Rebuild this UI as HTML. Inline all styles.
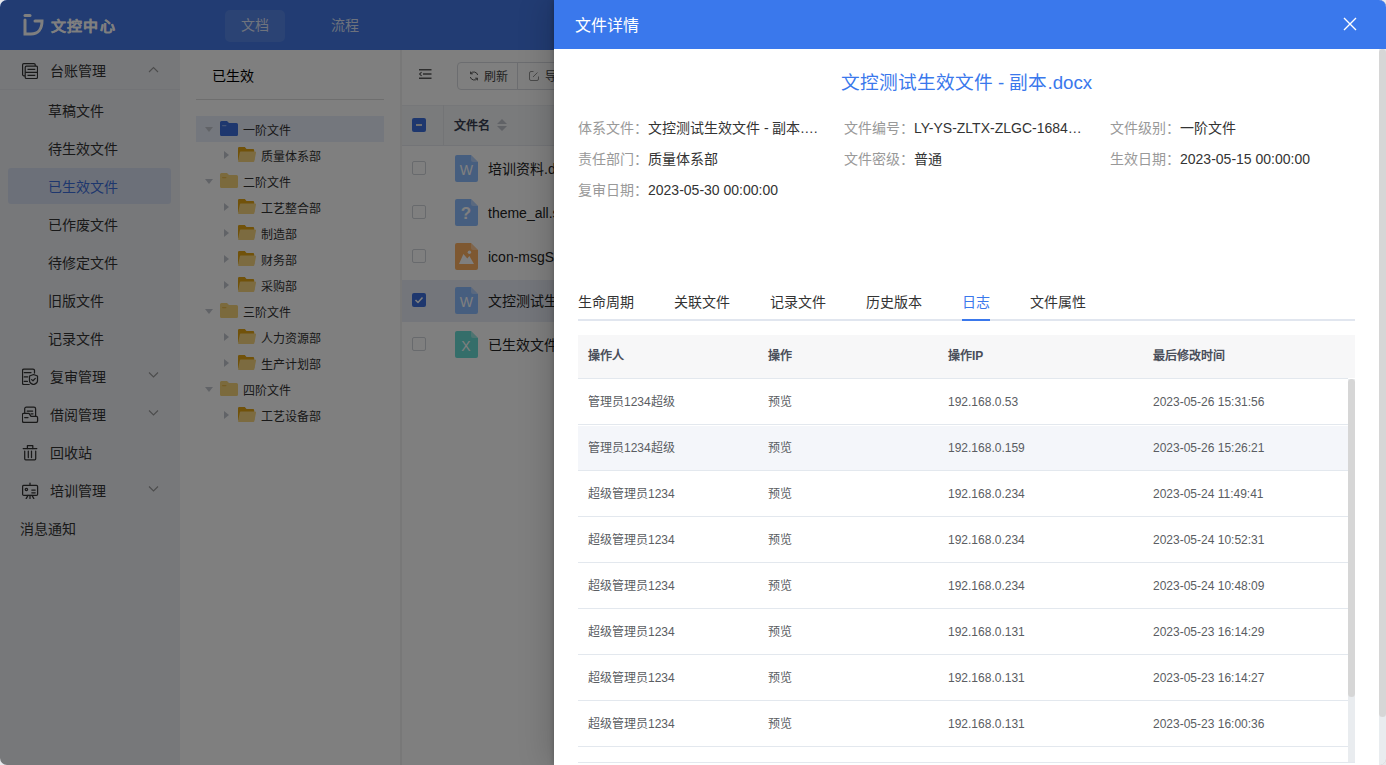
<!DOCTYPE html>
<html lang="zh-CN"><head><meta charset="utf-8">
<style>
*{box-sizing:border-box;margin:0;padding:0}
html,body{width:1386px;height:765px;overflow:hidden;background:#e8e9ec;font-family:"Liberation Sans",sans-serif;}
#app{position:absolute;left:0;top:0;width:1386px;height:765px;border-radius:7px;overflow:hidden;background:#fff}
.abs{position:absolute}
.hdr{left:0;top:0;width:1386px;height:50px;background:#4479e6}
.side{left:0;top:50px;width:180px;height:715px;background:#eef0f5}
.tree{left:180px;top:50px;width:220px;height:715px;background:#fff}
.main{left:402px;top:50px;width:984px;height:715px;background:#fff}
.gap{left:400px;top:50px;width:2px;height:715px;background:#f0f0f0}
.mask{left:0;top:0;width:1386px;height:765px;background:rgba(0,0,0,.5)}
.drawer{left:554px;top:0;width:832px;height:765px;background:#fff;box-shadow:0 0 6px rgba(0,0,0,.25),-6px 0 30px rgba(0,0,0,.16)}
.t{position:absolute;white-space:nowrap;line-height:1}
</style></head><body>
<div id="app">
  <!-- header -->
  <div class="abs hdr">
    <svg class="abs" style="left:23px;top:14px" width="22" height="22" viewBox="0 0 22 22">
      <path d="M2 1.5H7" stroke="#fff" stroke-width="3" stroke-linecap="round" fill="none"/>
      <path d="M2 6V20H8C15 20 19 15 19 7H12" stroke="#fff" stroke-width="3" stroke-linecap="round" fill="none"/>
    </svg>
    <div class="t" style="left:51px;top:18px;font-size:15px;font-weight:bold;color:#fff;letter-spacing:1.2px;-webkit-text-stroke:.2px #fff;transform:scaleY(.93)">文控中心</div>
    <div class="abs" style="left:225px;top:10px;width:60px;height:32px;border-radius:5px;background:rgba(255,255,255,.1)"></div>
    <div class="t" style="left:241px;top:18px;font-size:14px;color:rgba(255,255,255,.82)">文档</div>
    <div class="t" style="left:331px;top:18px;font-size:14px;color:rgba(255,255,255,.82)">流程</div>
  </div>
  <!-- sidebar -->

  <div class="abs side">
    <!-- 台账管理 -->
    <svg class="abs" style="left:22px;top:13px" width="16" height="16" viewBox="0 0 16 16" fill="none" stroke="#333" stroke-width="1.2">
      <path d="M3 12.8H1.8A1.2 1.2 0 0 1 .6 11.6V1.8A1.2 1.2 0 0 1 1.8 .6H12A1.2 1.2 0 0 1 13.2 1.8V3"/><rect x="3.2" y="3.2" width="12.3" height="12.3" rx="1.2"/><path d="M5.5 6.3H13.3M3.2 9.3H15.5M5.5 12.4H13.3"/>
    </svg>
    <div class="t" style="left:50px;top:14px;font-size:14px;color:#333">台账管理</div>
    <svg class="abs" style="left:148px;top:16px" width="11" height="7" viewBox="0 0 11 7" fill="none" stroke="#999" stroke-width="1.1"><path d="M1 6L5.5 1.5L10 6"/></svg>
    <div class="abs" style="left:0;top:39px;width:180px;height:1px;background:#e4e6ec"></div>
    <div class="t" style="left:48px;top:54px;font-size:14px;color:#333">草稿文件</div>
    <div class="t" style="left:48px;top:92px;font-size:14px;color:#333">待生效文件</div>
    <div class="abs" style="left:8px;top:118px;width:163px;height:36px;border-radius:3px;background:#d9e1f2"></div>
    <div class="t" style="left:48px;top:130px;font-size:14px;color:#3d6fdc">已生效文件</div>
    <div class="t" style="left:48px;top:168px;font-size:14px;color:#333">已作废文件</div>
    <div class="t" style="left:48px;top:206px;font-size:14px;color:#333">待修定文件</div>
    <div class="t" style="left:48px;top:244px;font-size:14px;color:#333">旧版文件</div>
    <div class="t" style="left:48px;top:282px;font-size:14px;color:#333">记录文件</div>
    <!-- 复审管理 -->
    <svg class="abs" style="left:22px;top:318px" width="17" height="17" viewBox="0 0 17 17" fill="none" stroke="#333" stroke-width="1.25" stroke-linecap="round" stroke-linejoin="round"><path d="M7.2 16.5H2A1.5 1.5 0 0 1 .5 15V2.5A1.5 1.5 0 0 1 2 1H11A1.5 1.5 0 0 1 12.5 2.5V5"/><path d="M2.2 4.5H9M2.2 8.9H5.6M2.2 13.4H5.4"/><path d="M11.5 6.5L15.5 8V12.8C15.5 14.5 13.5 16 11.5 16.6C9.5 16 7.5 14.5 7.5 12.8V8Z"/><path d="M9.6 11.6L11 12.8L13.3 10.4"/></svg>
    <div class="t" style="left:50px;top:320px;font-size:14px;color:#333">复审管理</div>
    <svg class="abs" style="left:148px;top:321px" width="11" height="7" viewBox="0 0 11 7" fill="none" stroke="#999" stroke-width="1.1"><path d="M1 1.5L5.5 6L10 1.5"/></svg>
    <!-- 借阅管理 -->
    <svg class="abs" style="left:22px;top:356px" width="17" height="17" viewBox="0 0 17 17" fill="none" stroke="#333" stroke-width="1.25" stroke-linecap="round" stroke-linejoin="round"><path d="M2.7 7.3V2.8A1.6 1.6 0 0 1 4.3 1.2H12A1.6 1.6 0 0 1 13.6 2.8V10.4"/><path d="M5.2 5H10.7M9 7.8H11"/><path d="M.4 15V8.8A1.3 1.3 0 0 1 1.7 7.3H7L9 10.4H14.3A1.3 1.3 0 0 1 15.6 11.7V15A1.4 1.4 0 0 1 14.2 16.4H1.8A1.4 1.4 0 0 1 .4 15Z"/><path d="M2.7 11.5H6"/></svg>
    <div class="t" style="left:50px;top:358px;font-size:14px;color:#333">借阅管理</div>
    <svg class="abs" style="left:148px;top:359px" width="11" height="7" viewBox="0 0 11 7" fill="none" stroke="#999" stroke-width="1.1"><path d="M1 1.5L5.5 6L10 1.5"/></svg>
    <!-- 回收站 -->
    <svg class="abs" style="left:22px;top:394px" width="17" height="17" viewBox="0 0 17 17" fill="none" stroke="#333" stroke-width="1.25" stroke-linecap="round" stroke-linejoin="round"><path d="M1.2 4.5H14.8"/><path d="M5.4 4.5V1.5H10.8V4.5"/><path d="M2.7 7V14.8A1 1 0 0 0 3.7 15.8H12.7A1 1 0 0 0 13.7 14.8V7"/><path d="M6.3 7V13.5M9.5 7V13.5"/></svg>
    <div class="t" style="left:50px;top:396px;font-size:14px;color:#333">回收站</div>
    <!-- 培训管理 -->
    <svg class="abs" style="left:22px;top:432px" width="17" height="17" viewBox="0 0 17 17" fill="none" stroke="#333" stroke-width="1.25" stroke-linecap="round" stroke-linejoin="round"><rect x=".6" y="3.4" width="15" height="10" rx="1.2"/><path d="M8 1V3.4"/><circle cx="4.4" cy="7.5" r="1.2"/><path d="M9.8 8H13.2M9.8 10.8H13.2"/><path d="M6 13.4L4.2 16.6M10 13.4L11.8 16.6M8 13.4V16.6"/></svg>
    <div class="t" style="left:50px;top:434px;font-size:14px;color:#333">培训管理</div>
    <svg class="abs" style="left:148px;top:435px" width="11" height="7" viewBox="0 0 11 7" fill="none" stroke="#999" stroke-width="1.1"><path d="M1 1.5L5.5 6L10 1.5"/></svg>
    <div class="t" style="left:20px;top:472px;font-size:14px;color:#333">消息通知</div>
  </div>
  <div class="abs gap"></div>
  <div class="abs tree">
<div class="t" style="left:32px;top:19px;font-size:14px;color:#000">已生效</div>
<div class="abs" style="left:16px;top:49px;width:188px;height:1px;background:#dcdcdc"></div>
<div class="abs" style="left:16px;top:66px;width:188px;height:26px;background:#e9eefa"></div>
<svg class="abs" style="left:25px;top:77px" width="8" height="5" viewBox="0 0 8 5"><path d="M0 0H8L4 5Z" fill="#c3c7cf"/></svg>
<svg class="abs" style="left:40px;top:71px" width="18" height="15" viewBox="0 0 18 15"><path d="M1.5 0H7L9 2H16.5A1.5 1.5 0 0 1 18 3.5V13.5A1.5 1.5 0 0 1 16.5 15H1.5A1.5 1.5 0 0 1 0 13.5V1.5A1.5 1.5 0 0 1 1.5 0Z" fill="#3d6fdc"/><rect x="2" y="4" width="4.5" height="1.2" rx=".6" fill="#86a8ee"/></svg>
<div class="t" style="left:63px;top:75px;font-size:12px;color:#333">一阶文件</div>
<svg class="abs" style="left:44px;top:101px" width="5" height="8" viewBox="0 0 5 8"><path d="M0 0V8L5 4Z" fill="#c3c7cf"/></svg>
<svg class="abs" style="left:58px;top:97px" width="18" height="15" viewBox="0 0 18 15"><path d="M1.2 0H6.8L8.5 2H15A1.2 1.2 0 0 1 16.2 3.2V13H0V1.2A1.2 1.2 0 0 1 1.2 0Z" fill="#e2a414"/><path d="M2.8 4.6H17A1 1 0 0 1 18 5.8L16.4 14.1A1.1 1.1 0 0 1 15.3 15H1A1 1 0 0 1 0 13.9L1.8 5.4A1 1 0 0 1 2.8 4.6Z" fill="#f8d680"/></svg>
<div class="t" style="left:81px;top:101px;font-size:12px;color:#333">质量体系部</div>
<svg class="abs" style="left:25px;top:129px" width="8" height="5" viewBox="0 0 8 5"><path d="M0 0H8L4 5Z" fill="#c3c7cf"/></svg>
<svg class="abs" style="left:40px;top:123px" width="18" height="15" viewBox="0 0 18 15"><path d="M1.5 0H7L9 2H16.5A1.5 1.5 0 0 1 18 3.5V13.5A1.5 1.5 0 0 1 16.5 15H1.5A1.5 1.5 0 0 1 0 13.5V1.5A1.5 1.5 0 0 1 1.5 0Z" fill="#f7d57a"/><rect x="2" y="4" width="4.5" height="1.2" rx=".6" fill="#e8b94a"/></svg>
<div class="t" style="left:63px;top:127px;font-size:12px;color:#333">二阶文件</div>
<svg class="abs" style="left:44px;top:153px" width="5" height="8" viewBox="0 0 5 8"><path d="M0 0V8L5 4Z" fill="#c3c7cf"/></svg>
<svg class="abs" style="left:58px;top:149px" width="18" height="15" viewBox="0 0 18 15"><path d="M1.2 0H6.8L8.5 2H15A1.2 1.2 0 0 1 16.2 3.2V13H0V1.2A1.2 1.2 0 0 1 1.2 0Z" fill="#e2a414"/><path d="M2.8 4.6H17A1 1 0 0 1 18 5.8L16.4 14.1A1.1 1.1 0 0 1 15.3 15H1A1 1 0 0 1 0 13.9L1.8 5.4A1 1 0 0 1 2.8 4.6Z" fill="#f8d680"/></svg>
<div class="t" style="left:81px;top:153px;font-size:12px;color:#333">工艺整合部</div>
<svg class="abs" style="left:44px;top:179px" width="5" height="8" viewBox="0 0 5 8"><path d="M0 0V8L5 4Z" fill="#c3c7cf"/></svg>
<svg class="abs" style="left:58px;top:175px" width="18" height="15" viewBox="0 0 18 15"><path d="M1.2 0H6.8L8.5 2H15A1.2 1.2 0 0 1 16.2 3.2V13H0V1.2A1.2 1.2 0 0 1 1.2 0Z" fill="#e2a414"/><path d="M2.8 4.6H17A1 1 0 0 1 18 5.8L16.4 14.1A1.1 1.1 0 0 1 15.3 15H1A1 1 0 0 1 0 13.9L1.8 5.4A1 1 0 0 1 2.8 4.6Z" fill="#f8d680"/></svg>
<div class="t" style="left:81px;top:179px;font-size:12px;color:#333">制造部</div>
<svg class="abs" style="left:44px;top:205px" width="5" height="8" viewBox="0 0 5 8"><path d="M0 0V8L5 4Z" fill="#c3c7cf"/></svg>
<svg class="abs" style="left:58px;top:201px" width="18" height="15" viewBox="0 0 18 15"><path d="M1.2 0H6.8L8.5 2H15A1.2 1.2 0 0 1 16.2 3.2V13H0V1.2A1.2 1.2 0 0 1 1.2 0Z" fill="#e2a414"/><path d="M2.8 4.6H17A1 1 0 0 1 18 5.8L16.4 14.1A1.1 1.1 0 0 1 15.3 15H1A1 1 0 0 1 0 13.9L1.8 5.4A1 1 0 0 1 2.8 4.6Z" fill="#f8d680"/></svg>
<div class="t" style="left:81px;top:205px;font-size:12px;color:#333">财务部</div>
<svg class="abs" style="left:44px;top:231px" width="5" height="8" viewBox="0 0 5 8"><path d="M0 0V8L5 4Z" fill="#c3c7cf"/></svg>
<svg class="abs" style="left:58px;top:227px" width="18" height="15" viewBox="0 0 18 15"><path d="M1.2 0H6.8L8.5 2H15A1.2 1.2 0 0 1 16.2 3.2V13H0V1.2A1.2 1.2 0 0 1 1.2 0Z" fill="#e2a414"/><path d="M2.8 4.6H17A1 1 0 0 1 18 5.8L16.4 14.1A1.1 1.1 0 0 1 15.3 15H1A1 1 0 0 1 0 13.9L1.8 5.4A1 1 0 0 1 2.8 4.6Z" fill="#f8d680"/></svg>
<div class="t" style="left:81px;top:231px;font-size:12px;color:#333">采购部</div>
<svg class="abs" style="left:25px;top:259px" width="8" height="5" viewBox="0 0 8 5"><path d="M0 0H8L4 5Z" fill="#c3c7cf"/></svg>
<svg class="abs" style="left:40px;top:253px" width="18" height="15" viewBox="0 0 18 15"><path d="M1.5 0H7L9 2H16.5A1.5 1.5 0 0 1 18 3.5V13.5A1.5 1.5 0 0 1 16.5 15H1.5A1.5 1.5 0 0 1 0 13.5V1.5A1.5 1.5 0 0 1 1.5 0Z" fill="#f7d57a"/><rect x="2" y="4" width="4.5" height="1.2" rx=".6" fill="#e8b94a"/></svg>
<div class="t" style="left:63px;top:257px;font-size:12px;color:#333">三阶文件</div>
<svg class="abs" style="left:44px;top:283px" width="5" height="8" viewBox="0 0 5 8"><path d="M0 0V8L5 4Z" fill="#c3c7cf"/></svg>
<svg class="abs" style="left:58px;top:279px" width="18" height="15" viewBox="0 0 18 15"><path d="M1.2 0H6.8L8.5 2H15A1.2 1.2 0 0 1 16.2 3.2V13H0V1.2A1.2 1.2 0 0 1 1.2 0Z" fill="#e2a414"/><path d="M2.8 4.6H17A1 1 0 0 1 18 5.8L16.4 14.1A1.1 1.1 0 0 1 15.3 15H1A1 1 0 0 1 0 13.9L1.8 5.4A1 1 0 0 1 2.8 4.6Z" fill="#f8d680"/></svg>
<div class="t" style="left:81px;top:283px;font-size:12px;color:#333">人力资源部</div>
<svg class="abs" style="left:44px;top:309px" width="5" height="8" viewBox="0 0 5 8"><path d="M0 0V8L5 4Z" fill="#c3c7cf"/></svg>
<svg class="abs" style="left:58px;top:305px" width="18" height="15" viewBox="0 0 18 15"><path d="M1.2 0H6.8L8.5 2H15A1.2 1.2 0 0 1 16.2 3.2V13H0V1.2A1.2 1.2 0 0 1 1.2 0Z" fill="#e2a414"/><path d="M2.8 4.6H17A1 1 0 0 1 18 5.8L16.4 14.1A1.1 1.1 0 0 1 15.3 15H1A1 1 0 0 1 0 13.9L1.8 5.4A1 1 0 0 1 2.8 4.6Z" fill="#f8d680"/></svg>
<div class="t" style="left:81px;top:309px;font-size:12px;color:#333">生产计划部</div>
<svg class="abs" style="left:25px;top:337px" width="8" height="5" viewBox="0 0 8 5"><path d="M0 0H8L4 5Z" fill="#c3c7cf"/></svg>
<svg class="abs" style="left:40px;top:331px" width="18" height="15" viewBox="0 0 18 15"><path d="M1.5 0H7L9 2H16.5A1.5 1.5 0 0 1 18 3.5V13.5A1.5 1.5 0 0 1 16.5 15H1.5A1.5 1.5 0 0 1 0 13.5V1.5A1.5 1.5 0 0 1 1.5 0Z" fill="#f7d57a"/><rect x="2" y="4" width="4.5" height="1.2" rx=".6" fill="#e8b94a"/></svg>
<div class="t" style="left:63px;top:335px;font-size:12px;color:#333">四阶文件</div>
<svg class="abs" style="left:44px;top:361px" width="5" height="8" viewBox="0 0 5 8"><path d="M0 0V8L5 4Z" fill="#c3c7cf"/></svg>
<svg class="abs" style="left:58px;top:357px" width="18" height="15" viewBox="0 0 18 15"><path d="M1.2 0H6.8L8.5 2H15A1.2 1.2 0 0 1 16.2 3.2V13H0V1.2A1.2 1.2 0 0 1 1.2 0Z" fill="#e2a414"/><path d="M2.8 4.6H17A1 1 0 0 1 18 5.8L16.4 14.1A1.1 1.1 0 0 1 15.3 15H1A1 1 0 0 1 0 13.9L1.8 5.4A1 1 0 0 1 2.8 4.6Z" fill="#f8d680"/></svg>
<div class="t" style="left:81px;top:361px;font-size:12px;color:#333">工艺设备部</div>
</div>
  <div class="abs main">
<svg class="abs" style="left:17px;top:19px" width="13" height="10" viewBox="0 0 13 10" fill="none" stroke="#5a5a5a" stroke-width="1.4"><path d="M0 .8H12.5M4 5H12.5M0 9.2H12.5"/><path d="M2.6 3.2L.6 5L2.6 6.8" stroke-width="1.1"/></svg>
<div class="abs" style="left:55px;top:12px;width:200px;height:28px;border:1px solid #d9dbe0;border-radius:4px"></div>
<div class="abs" style="left:115px;top:12px;width:1px;height:28px;background:#d9dbe0"></div>
<svg class="abs" style="left:67px;top:21px" width="10" height="10" viewBox="0 0 10 10" fill="none" stroke="#444" stroke-width=".9"><path d="M8.7 4A4 4 0 0 0 1.6 2.6M1.3 6A4 4 0 0 0 8.4 7.4"/><path d="M1.6 .6V2.8H3.8M8.4 9.4V7.2H6.2"/></svg>
<div class="t" style="left:82px;top:21px;font-size:12px;color:#444">刷新</div>
<svg class="abs" style="left:127px;top:21px" width="10" height="10" viewBox="0 0 10 10" fill="none" stroke="#888" stroke-width=".9"><path d="M4.5 .5H2A1.5 1.5 0 0 0 .5 2V8A1.5 1.5 0 0 0 2 9.5H8A1.5 1.5 0 0 0 9.5 8V5.5"/><path d="M4 6L8.5 1.5"/></svg>
<div class="t" style="left:143px;top:21px;font-size:12px;color:#444">导出</div>
<div class="abs" style="left:0;top:55px;width:984px;height:41px;background:#f5f6f8;border-top:1px solid #eceef2;border-bottom:1px solid #e6e9ef"></div>
<div class="abs" style="left:41px;top:55px;width:1px;height:40px;background:#e6e8ec"></div>
<div class="abs" style="left:10px;top:68px;width:14px;height:14px;border-radius:2px;background:#3d6fdc"></div>
<div class="abs" style="left:14px;top:74px;width:6px;height:2px;background:#ddd"></div>
<div class="t" style="left:52px;top:70px;font-size:12px;font-weight:bold;color:#383f52">文件名</div>
<svg class="abs" style="left:95px;top:69px" width="10" height="12" viewBox="0 0 10 12"><path d="M5 0L10 5H0Z M0 7H10L5 12Z" fill="#c0c4cc"/></svg>
<div class="abs" style="left:10px;top:111px;width:14px;height:14px;border-radius:2px;border:1px solid #d0d4da;background:#fff"></div>
<svg class="abs" style="left:53px;top:105px" width="23" height="27" viewBox="0 0 23 27"><path d="M2 0H16L23 7V25A2 2 0 0 1 21 27H2A2 2 0 0 1 0 25V2A2 2 0 0 1 2 0Z" fill="#8cbcff"/><path d="M16 0L23 7H18A2 2 0 0 1 16 5Z" fill="#fff" fill-opacity=".35"/><text x="11.3" y="20" font-family="Liberation Sans" font-size="14" fill="#fff" text-anchor="middle">W</text></svg>
<div class="t" style="left:86px;top:112px;font-size:14px;color:#222">培训资料.docx</div>
<div class="abs" style="left:10px;top:155px;width:14px;height:14px;border-radius:2px;border:1px solid #d0d4da;background:#fff"></div>
<svg class="abs" style="left:53px;top:149px" width="23" height="27" viewBox="0 0 23 27"><path d="M2 0H16L23 7V25A2 2 0 0 1 21 27H2A2 2 0 0 1 0 25V2A2 2 0 0 1 2 0Z" fill="#8cbcff"/><path d="M16 0L23 7H18A2 2 0 0 1 16 5Z" fill="#fff" fill-opacity=".35"/><text x="11" y="20" font-family="Liberation Sans" font-size="17" font-weight="bold" fill="#fff" text-anchor="middle">?</text></svg>
<div class="t" style="left:86px;top:156px;font-size:14px;color:#222">theme_all.scss</div>
<div class="abs" style="left:10px;top:199px;width:14px;height:14px;border-radius:2px;border:1px solid #d0d4da;background:#fff"></div>
<svg class="abs" style="left:53px;top:193px" width="23" height="27" viewBox="0 0 23 27"><path d="M2 0H16L23 7V25A2 2 0 0 1 21 27H2A2 2 0 0 1 0 25V2A2 2 0 0 1 2 0Z" fill="#fdb062"/><path d="M16 0L23 7H18A2 2 0 0 1 16 5Z" fill="#fff" fill-opacity=".35"/><circle cx="14.4" cy="9.2" r="1.7" fill="#fff"/><path d="M4 21L8.4 11L12.3 15.6L14.4 13L19 21Z" fill="#fff"/></svg>
<div class="t" style="left:86px;top:200px;font-size:14px;color:#222">icon-msgSend.png</div>
<div class="abs" style="left:0;top:230px;width:984px;height:42px;background:#e8edf7"></div>
<div class="abs" style="left:10px;top:243px;width:14px;height:14px;border-radius:2px;background:#3d6fdc"></div>
<svg class="abs" style="left:10px;top:243px" width="14" height="14" viewBox="0 0 14 14" fill="none" stroke="#fff" stroke-width="1.5"><path d="M3.5 7L6 9.5L10.5 4.5"/></svg>
<svg class="abs" style="left:53px;top:237px" width="23" height="27" viewBox="0 0 23 27"><path d="M2 0H16L23 7V25A2 2 0 0 1 21 27H2A2 2 0 0 1 0 25V2A2 2 0 0 1 2 0Z" fill="#8cbcff"/><path d="M16 0L23 7H18A2 2 0 0 1 16 5Z" fill="#fff" fill-opacity=".35"/><text x="11.3" y="20" font-family="Liberation Sans" font-size="14" fill="#fff" text-anchor="middle">W</text></svg>
<div class="t" style="left:86px;top:244px;font-size:14px;color:#222">文控测试生效文件 - 副本.docx</div>
<div class="abs" style="left:10px;top:287px;width:14px;height:14px;border-radius:2px;border:1px solid #d0d4da;background:#fff"></div>
<svg class="abs" style="left:53px;top:281px" width="23" height="27" viewBox="0 0 23 27"><path d="M2 0H16L23 7V25A2 2 0 0 1 21 27H2A2 2 0 0 1 0 25V2A2 2 0 0 1 2 0Z" fill="#68dcd5"/><path d="M16 0L23 7H18A2 2 0 0 1 16 5Z" fill="#fff" fill-opacity=".35"/><text x="11" y="20" font-family="Liberation Sans" font-size="14" fill="#fff" text-anchor="middle">X</text></svg>
<div class="t" style="left:86px;top:288px;font-size:14px;color:#222">已生效文件.xlsx</div>
</div>
  <div class="abs mask"></div>
  <!-- drawer -->
  <div class="abs drawer">
<div class="abs" style="left:0;top:0;width:832px;height:49px;background:#3a78ec"></div>
<div class="t" style="left:21px;top:18px;font-size:16px;color:#fff">文件详情</div>
<svg class="abs" style="left:789px;top:17px" width="14" height="14" viewBox="0 0 14 14" stroke="#fff" stroke-width="1.4"><path d="M1 1L13 13M13 1L1 13"/></svg>
<div class="t" style="left:0;width:825px;text-align:center;top:74px;font-size:18.7px;color:#3a78ec">文控测试生效文件 - 副本.docx</div>
<div class="t" style="left:24px;top:121px;font-size:14px;color:#999">体系文件：</div>
<div class="t" style="left:94px;top:121px;width:172px;overflow:hidden;text-overflow:ellipsis;font-size:14px;color:#333">文控测试生效文件 - 副本.docx</div>
<div class="t" style="left:290px;top:121px;font-size:14px;color:#999">文件编号：</div>
<div class="t" style="left:360px;top:121px;width:172px;overflow:hidden;text-overflow:ellipsis;font-size:14px;color:#333">LY-YS-ZLTX-ZLGC-1684222</div>
<div class="t" style="left:556px;top:121px;font-size:14px;color:#999">文件级别：</div>
<div class="t" style="left:626px;top:121px;width:172px;overflow:hidden;text-overflow:ellipsis;font-size:14px;color:#333">一阶文件</div>
<div class="t" style="left:24px;top:152px;font-size:14px;color:#999">责任部门：</div>
<div class="t" style="left:94px;top:152px;width:172px;overflow:hidden;text-overflow:ellipsis;font-size:14px;color:#333">质量体系部</div>
<div class="t" style="left:290px;top:152px;font-size:14px;color:#999">文件密级：</div>
<div class="t" style="left:360px;top:152px;width:172px;overflow:hidden;text-overflow:ellipsis;font-size:14px;color:#333">普通</div>
<div class="t" style="left:556px;top:152px;font-size:14px;color:#999">生效日期：</div>
<div class="t" style="left:626px;top:152px;width:172px;overflow:hidden;text-overflow:ellipsis;font-size:14px;color:#333">2023-05-15 00:00:00</div>
<div class="t" style="left:24px;top:183px;font-size:14px;color:#999">复审日期：</div>
<div class="t" style="left:94px;top:183px;width:172px;overflow:hidden;text-overflow:ellipsis;font-size:14px;color:#333">2023-05-30 00:00:00</div>
<div class="t" style="left:24px;top:295px;font-size:14px;color:#333">生命周期</div>
<div class="t" style="left:120px;top:295px;font-size:14px;color:#333">关联文件</div>
<div class="t" style="left:216px;top:295px;font-size:14px;color:#333">记录文件</div>
<div class="t" style="left:312px;top:295px;font-size:14px;color:#333">历史版本</div>
<div class="t" style="left:408px;top:295px;font-size:14px;color:#3a78ec">日志</div>
<div class="t" style="left:476px;top:295px;font-size:14px;color:#333">文件属性</div>
<div class="abs" style="left:24px;top:319px;width:777px;height:2px;background:#e1e6ef"></div>
<div class="abs" style="left:408px;top:319px;width:28px;height:2px;background:#3a78ec"></div>
<div class="abs" style="left:24px;top:335px;width:777px;height:43px;background:#f7f7f8"></div>
<div class="abs" style="left:24px;top:378px;width:770px;height:1px;background:#e3e8ee"></div>
<div class="t" style="left:34px;top:350px;font-size:12px;font-weight:bold;color:#4a4f5a">操作人</div>
<div class="t" style="left:214px;top:350px;font-size:12px;font-weight:bold;color:#4a4f5a">操作</div>
<div class="t" style="left:394px;top:350px;font-size:12px;font-weight:bold;color:#4a4f5a">操作IP</div>
<div class="t" style="left:599px;top:350px;font-size:12px;font-weight:bold;color:#4a4f5a">最后修改时间</div>
<div class="abs" style="left:24px;top:424px;width:770px;height:1px;background:#e3e8ee"></div>
<div class="t" style="left:34px;top:396px;font-size:12px;color:#5a5d62">管理员1234超级</div>
<div class="t" style="left:214px;top:396px;font-size:12px;color:#5a5d62">预览</div>
<div class="t" style="left:394px;top:396px;font-size:12px;color:#5a5d62">192.168.0.53</div>
<div class="t" style="left:599px;top:396px;font-size:12px;color:#5a5d62">2023-05-26 15:31:56</div>
<div class="abs" style="left:24px;top:426px;width:770px;height:44px;background:#f4f6fa"></div>
<div class="abs" style="left:24px;top:470px;width:770px;height:1px;background:#e3e8ee"></div>
<div class="t" style="left:34px;top:442px;font-size:12px;color:#5a5d62">管理员1234超级</div>
<div class="t" style="left:214px;top:442px;font-size:12px;color:#5a5d62">预览</div>
<div class="t" style="left:394px;top:442px;font-size:12px;color:#5a5d62">192.168.0.159</div>
<div class="t" style="left:599px;top:442px;font-size:12px;color:#5a5d62">2023-05-26 15:26:21</div>
<div class="abs" style="left:24px;top:516px;width:770px;height:1px;background:#e3e8ee"></div>
<div class="t" style="left:34px;top:488px;font-size:12px;color:#5a5d62">超级管理员1234</div>
<div class="t" style="left:214px;top:488px;font-size:12px;color:#5a5d62">预览</div>
<div class="t" style="left:394px;top:488px;font-size:12px;color:#5a5d62">192.168.0.234</div>
<div class="t" style="left:599px;top:488px;font-size:12px;color:#5a5d62">2023-05-24 11:49:41</div>
<div class="abs" style="left:24px;top:562px;width:770px;height:1px;background:#e3e8ee"></div>
<div class="t" style="left:34px;top:534px;font-size:12px;color:#5a5d62">超级管理员1234</div>
<div class="t" style="left:214px;top:534px;font-size:12px;color:#5a5d62">预览</div>
<div class="t" style="left:394px;top:534px;font-size:12px;color:#5a5d62">192.168.0.234</div>
<div class="t" style="left:599px;top:534px;font-size:12px;color:#5a5d62">2023-05-24 10:52:31</div>
<div class="abs" style="left:24px;top:608px;width:770px;height:1px;background:#e3e8ee"></div>
<div class="t" style="left:34px;top:580px;font-size:12px;color:#5a5d62">超级管理员1234</div>
<div class="t" style="left:214px;top:580px;font-size:12px;color:#5a5d62">预览</div>
<div class="t" style="left:394px;top:580px;font-size:12px;color:#5a5d62">192.168.0.234</div>
<div class="t" style="left:599px;top:580px;font-size:12px;color:#5a5d62">2023-05-24 10:48:09</div>
<div class="abs" style="left:24px;top:654px;width:770px;height:1px;background:#e3e8ee"></div>
<div class="t" style="left:34px;top:626px;font-size:12px;color:#5a5d62">超级管理员1234</div>
<div class="t" style="left:214px;top:626px;font-size:12px;color:#5a5d62">预览</div>
<div class="t" style="left:394px;top:626px;font-size:12px;color:#5a5d62">192.168.0.131</div>
<div class="t" style="left:599px;top:626px;font-size:12px;color:#5a5d62">2023-05-23 16:14:29</div>
<div class="abs" style="left:24px;top:700px;width:770px;height:1px;background:#e3e8ee"></div>
<div class="t" style="left:34px;top:672px;font-size:12px;color:#5a5d62">超级管理员1234</div>
<div class="t" style="left:214px;top:672px;font-size:12px;color:#5a5d62">预览</div>
<div class="t" style="left:394px;top:672px;font-size:12px;color:#5a5d62">192.168.0.131</div>
<div class="t" style="left:599px;top:672px;font-size:12px;color:#5a5d62">2023-05-23 16:14:27</div>
<div class="abs" style="left:24px;top:746px;width:770px;height:1px;background:#e3e8ee"></div>
<div class="t" style="left:34px;top:718px;font-size:12px;color:#5a5d62">超级管理员1234</div>
<div class="t" style="left:214px;top:718px;font-size:12px;color:#5a5d62">预览</div>
<div class="t" style="left:394px;top:718px;font-size:12px;color:#5a5d62">192.168.0.131</div>
<div class="t" style="left:599px;top:718px;font-size:12px;color:#5a5d62">2023-05-23 16:00:36</div>
<div class="abs" style="left:24px;top:762px;width:777px;height:1px;background:#e3e8ee"></div>
<div class="abs" style="left:794px;top:379px;width:7px;height:383px;background:#e9ecef"></div>
<div class="abs" style="left:794px;top:379px;width:7px;height:318px;border-radius:4px;background:#d6d6d6"></div>
<div class="abs" style="left:825px;top:49px;width:7px;height:716px;background:#e9ecef"></div>
<div class="abs" style="left:825px;top:49px;width:7px;height:668px;border-radius:4px;background:#d6d6d6"></div>
  </div>
</div>
</body></html>
